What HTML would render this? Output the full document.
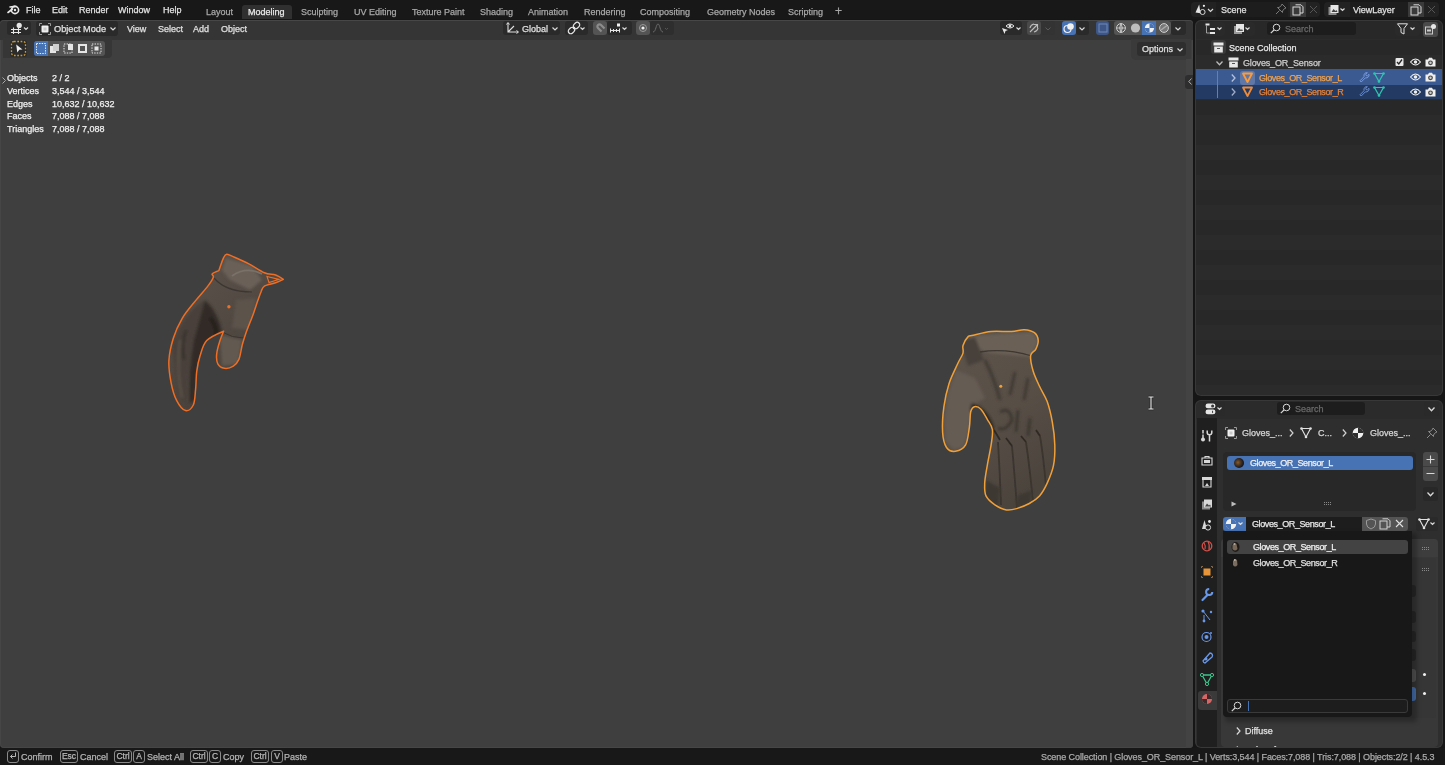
<!DOCTYPE html>
<html><head><meta charset="utf-8">
<style>
*{box-sizing:border-box;margin:0;padding:0}
html,body{width:1445px;height:765px;overflow:hidden;background:#161616;font-family:"Liberation Sans",sans-serif;font-size:9px;color:#dcdcdc}
.a{position:absolute}
#top,#vp,#outl,#props,#status{will-change:transform}
.t{position:absolute;white-space:nowrap;line-height:10px;height:10px;-webkit-font-smoothing:antialiased;-webkit-text-stroke:0.25px currentColor}
svg{position:absolute;overflow:visible}
#top{left:0;top:0;width:1445px;height:19px;background:#181818}
#vp{left:0px;top:20px;width:1193px;height:728px;background:#3f3f3f;border-radius:4px;overflow:hidden;box-shadow:inset 0 0 0 1px #464646}
#outl{left:1195px;top:20px;width:248px;height:376px;background:#282828;border-radius:6px;overflow:hidden}
#outl::after,#props::after{content:"";position:absolute;left:0;top:0;right:0;bottom:0;border-radius:6px;box-shadow:inset 0 0 0 1px #383838;pointer-events:none}
#props{left:1195px;top:400px;width:248px;height:348px;background:#2e2e2e;border-radius:6px;overflow:hidden}
#status{left:0;top:748px;width:1445px;height:17px;background:#181818}
.menu{color:#e2e2e2}
.tab{color:#a8a8a8}
.btn{position:absolute;background:#282828;border-radius:3px}
.key{position:absolute;border:1px solid #8a8a8a;border-radius:3px;height:13px;top:2px;color:#b8b8b8;font-size:8.5px;line-height:11px;text-align:center;-webkit-text-stroke:0.25px currentColor}
.st{color:#b4b4b4;top:4px}
</style></head><body>

<!-- TOP BAR -->
<div id="top" class="a">
  <!-- blender logo -->
  <svg style="left:7px;top:4px" width="13" height="11" viewBox="0 0 13 11">
    <circle cx="8" cy="6" r="3.6" fill="none" stroke="#e8e8e8" stroke-width="1.6"/>
    <circle cx="8" cy="6" r="1.2" fill="#e8e8e8"/>
    <path d="M1 8.5 L5.5 5 M3 3 L8 2.4" stroke="#e8e8e8" stroke-width="1.6" stroke-linecap="round"/>
  </svg>
  <div class="t menu" style="left:26px;top:5px">File</div>
  <div class="t menu" style="left:52px;top:5px">Edit</div>
  <div class="t menu" style="left:79px;top:5px">Render</div>
  <div class="t menu" style="left:118px;top:5px">Window</div>
  <div class="t menu" style="left:163px;top:5px">Help</div>

  <div class="a" style="left:242px;top:5px;width:50px;height:14px;background:#303030;border-radius:3px 3px 0 0"></div>
  <div class="t tab" style="left:206px;top:7px">Layout</div>
  <div class="t" style="left:248px;top:7px;color:#eaeaea">Modeling</div>
  <div class="t tab" style="left:301px;top:7px">Sculpting</div>
  <div class="t tab" style="left:354px;top:7px">UV Editing</div>
  <div class="t tab" style="left:412px;top:7px">Texture Paint</div>
  <div class="t tab" style="left:480px;top:7px">Shading</div>
  <div class="t tab" style="left:528px;top:7px">Animation</div>
  <div class="t tab" style="left:584px;top:7px">Rendering</div>
  <div class="t tab" style="left:640px;top:7px">Compositing</div>
  <div class="t tab" style="left:707px;top:7px">Geometry Nodes</div>
  <div class="t tab" style="left:788px;top:7px">Scripting</div>
  <div class="t tab" style="left:835px;top:6px;font-size:12px">+</div>

  <!-- scene selector -->
  <div class="a" style="left:1191px;top:2px;width:129px;height:15px;background:#222;border-radius:4px"></div>
  <div class="a" style="left:1216px;top:2px;width:72px;height:15px;background:#1d1d1d"></div>
  <div class="a" style="left:1290px;top:2px;width:16px;height:15px;background:#3a3a3a"></div>
  <div class="t" style="left:1221px;top:5px;color:#e0e0e0">Scene</div>
  <svg style="left:1195px;top:4px" width="20" height="12" viewBox="0 0 20 12">
    <path d="M0.5 8.5 L4.2 0.5 L5.5 9.3 Z" fill="#e6e6e6"/><circle cx="7.6" cy="8" r="2.5" fill="#1d1d1d" stroke="#d8d8d8" stroke-width="1"/><circle cx="8.9" cy="1.8" r="1.1" fill="#f0f0f0"/>
    <path d="M13 5 L15.5 7.5 L18 5" fill="none" stroke="#d8d8d8" stroke-width="1.2"/>
  </svg>
  <svg style="left:1275px;top:3px" width="12" height="12" viewBox="0 0 12 12"><path d="M7 1 L11 5 L9.5 5.5 L7.5 8 L7.5 9.5 L2.5 4.5 L4 4.5 L6.5 2.5 Z M4.5 7.5 L1 11" fill="none" stroke="#7a7a7a" stroke-width="1"/></svg>
  <svg style="left:1292px;top:4px" width="12" height="12" viewBox="0 0 12 12"><rect x="1" y="3" width="7" height="8" fill="none" stroke="#d8d8d8" stroke-width="1"/><path d="M3.5 0.8 H9 L11 2.8 V9 H8" fill="none" stroke="#d8d8d8" stroke-width="1"/></svg>
  <svg style="left:1309px;top:5px" width="9" height="9" viewBox="0 0 9 9"><path d="M1 1 L8 8 M8 1 L1 8" stroke="#555" stroke-width="1"/></svg>
  <div class="a" style="left:1324px;top:2px;width:115px;height:15px;background:#222;border-radius:4px"></div>
  <div class="a" style="left:1350px;top:2px;width:58px;height:15px;background:#1d1d1d"></div>
  <div class="a" style="left:1408px;top:2px;width:16px;height:15px;background:#3a3a3a"></div>
  <div class="t" style="left:1353px;top:5px;color:#e0e0e0">ViewLayer</div>
  <svg style="left:1328px;top:4px" width="20" height="12" viewBox="0 0 20 12">
    <rect x="0.5" y="3" width="8" height="8" fill="#8a8a8a"/><rect x="2.5" y="1" width="8" height="8" fill="#e6e6e6"/><path d="M3.5 8 L5.5 5 L7.5 7 L8.5 6 L9.5 8 Z" fill="#444"/>
    <path d="M12.5 4.5 L14.5 6.5 L16.5 4.5" fill="none" stroke="#d8d8d8" stroke-width="1.2"/>
  </svg>
  <svg style="left:1410px;top:4px" width="12" height="12" viewBox="0 0 12 12"><rect x="1" y="3" width="7" height="8" fill="none" stroke="#d8d8d8" stroke-width="1"/><path d="M3.5 0.8 H9 L11 2.8 V9 H8" fill="none" stroke="#d8d8d8" stroke-width="1"/></svg>
  <svg style="left:1427px;top:5px" width="9" height="9" viewBox="0 0 9 9"><path d="M1 1 L8 8 M8 1 L1 8" stroke="#555" stroke-width="1"/></svg>
</div>

<!-- VIEWPORT -->
<div id="vp" class="a">
  <div class="a" style="left:0;top:0;width:1193px;height:20px;background:#353535;border-radius:4px 4px 0 0;box-shadow:inset 0 1px 0 #474747"></div>
  <div class="a" style="left:2px;top:-1px;width:1190px;height:729px">
  <!-- header: coordinates relative to vp (x-2, y-19) -->
  <!-- editor type -->
  <div class="btn" style="left:5px;top:2px;width:24px;height:14px;background:#2a2a2a"></div>
  <svg style="left:8px;top:3px" width="20" height="12" viewBox="0 0 20 12">
    <path d="M1 7.5 H11 M1 10.5 H11 M3.5 5.5 V12 M8.5 5.5 V12" stroke="#e6e6e6" stroke-width="1.1"/>
    <circle cx="9.2" cy="3.4" r="2.6" fill="#e6e6e6"/>
    <path d="M14 5.5 L16 7.5 L18 5.5" fill="none" stroke="#d8d8d8" stroke-width="1.2"/>
  </svg>
  <!-- object mode -->
  <div class="btn" style="left:34px;top:2px;width:82px;height:15px;background:#2a2a2a"></div>
  <svg style="left:37px;top:4px" width="12" height="12" viewBox="0 0 12 12">
    <path d="M0.5 3 V0.5 H3 M9 0.5 H11.5 V3 M11.5 9 V11.5 H9 M3 11.5 H0.5 V9" fill="none" stroke="#9a9a9a" stroke-width="1"/>
    <rect x="2.5" y="2.5" width="7" height="7" rx="1" fill="#f0f0f0"/>
    <rect x="4.5" y="4.5" width="3" height="3" fill="#c8c8c8"/>
  </svg>
  <div class="t" style="left:52px;top:5px;color:#e0e0e0;font-size:9.2px">Object Mode</div>
  <svg style="left:108px;top:8px" width="6" height="4" viewBox="0 0 6 4"><path d="M0.5 0.5 L3 3 L5.5 0.5" fill="none" stroke="#d8d8d8" stroke-width="1.2"/></svg>
  <div class="t" style="left:125px;top:5px;color:#e0e0e0">View</div>
  <div class="t" style="left:156px;top:5px;color:#e0e0e0">Select</div>
  <div class="t" style="left:191px;top:5px;color:#e0e0e0">Add</div>
  <div class="t" style="left:219px;top:5px;color:#e0e0e0">Object</div>

  <!-- transform orientation -->
  <div class="btn" style="left:501px;top:2px;width:57px;height:14px;background:#2a2a2a"></div>
  <svg style="left:504px;top:3px" width="14" height="12" viewBox="0 0 14 12">
    <path d="M2 1 V10 H12 M2 10 L8 4" fill="none" stroke="#e0e0e0" stroke-width="1.1"/>
    <path d="M0.5 2.5 L2 0.5 L3.5 2.5 M10.5 8.5 L12.5 10 L10.5 11.5" fill="none" stroke="#e0e0e0" stroke-width="1"/>
  </svg>
  <div class="t" style="left:520px;top:5px;color:#e0e0e0">Global</div>
  <svg style="left:550px;top:8px" width="6" height="4" viewBox="0 0 6 4"><path d="M0.5 0.5 L3 3 L5.5 0.5" fill="none" stroke="#d8d8d8" stroke-width="1.2"/></svg>
  <!-- pivot -->
  <div class="btn" style="left:563px;top:2px;width:23px;height:14px;background:#2a2a2a"></div>
  <svg style="left:566px;top:3px" width="18" height="12" viewBox="0 0 18 12">
    <rect x="0" y="6" width="7" height="5" rx="2.5" transform="rotate(-45 3.5 8.5)" fill="none" stroke="#e6e6e6" stroke-width="1.2"/>
    <rect x="5" y="1" width="7" height="5" rx="2.5" transform="rotate(-45 8.5 3.5)" fill="none" stroke="#e6e6e6" stroke-width="1.2"/>
    <circle cx="6" cy="6" r="1.3" fill="#e6e6e6"/>
    <path d="M12.5 5.5 L14.5 7.5 L16.5 5.5" fill="none" stroke="#d8d8d8" stroke-width="1.2"/>
  </svg>
  <!-- snap -->
  <div class="btn" style="left:591px;top:2px;width:14px;height:14px;background:#545454"></div>
  <svg style="left:592px;top:3px" width="12" height="12" viewBox="0 0 12 12"><path d="M2.5 9.5 L6 6 A2.1 2.1 0 0 1 9 9 L5.5 12.5" transform="rotate(-90 6 6) translate(0 -2)" fill="none" stroke="#8c8c8c" stroke-width="2.2"/></svg>
  <div class="btn" style="left:605px;top:2px;width:25px;height:14px;background:#2a2a2a"></div>
  <svg style="left:607px;top:3px" width="22" height="12" viewBox="0 0 22 12">
    <path d="M1 8.5 H11 M1.5 6.5 V10.5 M4.5 7 V10 M7.5 7 V10 M10.5 6.5 V10.5" stroke="#e6e6e6" stroke-width="1"/>
    <rect x="8" y="1.5" width="3" height="3" fill="#f0f0f0"/>
    <path d="M13.5 5.5 L15.5 7.5 L17.5 5.5" fill="none" stroke="#d8d8d8" stroke-width="1.2"/>
  </svg>
  <!-- proportional -->
  <div class="btn" style="left:634px;top:2px;width:14px;height:14px;background:#545454"></div>
  <svg style="left:636px;top:4px" width="10" height="10" viewBox="0 0 10 10"><circle cx="5" cy="5" r="3.5" fill="none" stroke="#9a9a9a" stroke-width="1"/><circle cx="5" cy="5" r="1.6" fill="#f0f0f0"/></svg>
  <div class="btn" style="left:648px;top:2px;width:24px;height:14px;background:#2e2e2e"></div>
  <svg style="left:650px;top:3px" width="20" height="12" viewBox="0 0 20 12"><path d="M1 10 C4 10 4 2 6 2 C8 2 8 10 11 10" fill="none" stroke="#6a6a6a" stroke-width="1"/><path d="M13 6 L14.5 7.5 L16 6" fill="none" stroke="#555" stroke-width="1"/></svg>

  <!-- right header icons -->
  <div class="btn" style="left:998px;top:2px;width:22px;height:14px;background:#2a2a2a"></div>
  <svg style="left:999px;top:3px" width="22" height="12" viewBox="0 0 22 12">
    <path d="M5 4 Q9 0 13 4 Q9 8 5 4 Z" fill="none" stroke="#e6e6e6" stroke-width="1"/><circle cx="9" cy="4" r="1.4" fill="#e6e6e6"/>
    <path d="M1 6 L7 8 L4.5 9 L3.5 12 Z" fill="#e6e6e6"/>
    <path d="M15.5 5.5 L17.5 7.5 L19.5 5.5" fill="none" stroke="#d8d8d8" stroke-width="1.2"/>
  </svg>
  <div class="btn" style="left:1025px;top:2px;width:14px;height:14px;background:#4a4a4a"></div>
  <svg style="left:1026px;top:3px" width="12" height="12" viewBox="0 0 12 12"><path d="M2 10 L9 3 M6 2.5 H9.5 V6 M2 6 A5 5 0 0 1 6 2 M6 10 A5 5 0 0 0 10 6" fill="none" stroke="#bdbdbd" stroke-width="1.1"/></svg>
  <div class="btn" style="left:1039px;top:2px;width:14px;height:14px;background:#333"></div>
  <svg style="left:1043px;top:8px" width="6" height="4" viewBox="0 0 6 4"><path d="M0.5 0.5 L3 3 L5.5 0.5" fill="none" stroke="#5a5a5a" stroke-width="1"/></svg>
  <div class="btn" style="left:1060px;top:2px;width:14px;height:14px;background:#4772b3"></div>
  <svg style="left:1061px;top:3px" width="12" height="12" viewBox="0 0 12 12"><circle cx="4.5" cy="7" r="3.5" fill="none" stroke="#f0f0f0" stroke-width="1.2"/><circle cx="7.5" cy="4.5" r="3.3" fill="#f0f0f0"/></svg>
  <div class="btn" style="left:1074px;top:2px;width:13px;height:14px;background:#2a2a2a"></div>
  <svg style="left:1077px;top:8px" width="6" height="4" viewBox="0 0 6 4"><path d="M0.5 0.5 L3 3 L5.5 0.5" fill="none" stroke="#d8d8d8" stroke-width="1.2"/></svg>
  <div class="btn" style="left:1094px;top:2px;width:13px;height:14px;background:#3e5685"></div>
  <svg style="left:1096px;top:4px" width="10" height="10" viewBox="0 0 10 10"><rect x="1" y="1" width="8" height="8" fill="none" stroke="#6e88b8" stroke-width="1"/></svg>
  <div class="btn" style="left:1112px;top:2px;width:57px;height:14px;background:#545454"></div>
  <div class="a" style="left:1140px;top:2px;width:14px;height:14px;background:#4772b3"></div>
  <svg style="left:1113px;top:3px" width="56" height="12" viewBox="0 0 56 12">
    <circle cx="6" cy="6" r="4.4" fill="none" stroke="#cfcfcf" stroke-width="1"/><path d="M1.6 6 H10.4 M6 1.6 V10.4 M6 1.6 Q3 6 6 10.4 M6 1.6 Q9 6 6 10.4" fill="none" stroke="#cfcfcf" stroke-width="0.8"/>
    <circle cx="20.5" cy="6" r="4.6" fill="#bdbdbd"/>
    <circle cx="34.5" cy="6" r="4.6" fill="#f0f0f0"/><path d="M34.5 6 V1.4 A4.6 4.6 0 0 1 39.1 6 Z M34.5 6 V10.6 A4.6 4.6 0 0 1 29.9 6 Z" fill="#4772b3"/>
    <circle cx="49" cy="6" r="4.4" fill="#777" stroke="#cfcfcf" stroke-width="1"/><path d="M46 8 L52 3.5" stroke="#aaa" stroke-width="1.5"/>
  </svg>
  <div class="btn" style="left:1169px;top:2px;width:15px;height:14px;background:#2a2a2a"></div>
  <svg style="left:1173px;top:8px" width="6" height="4" viewBox="0 0 6 4"><path d="M0.5 0.5 L3 3 L5.5 0.5" fill="none" stroke="#d8d8d8" stroke-width="1.2"/></svg>

  <!-- Options -->
  <div class="a" style="left:1129px;top:20px;width:60px;height:21px;background:#3a3a3a;border-radius:0 0 0 5px"></div>
  <div class="btn" style="left:1135px;top:23px;width:49px;height:14px;background:#2e2e2e"></div>
  <div class="t" style="left:1140px;top:25px;color:#e0e0e0">Options</div>
  <svg style="left:1175px;top:29px" width="6" height="4" viewBox="0 0 6 4"><path d="M0.5 0.5 L3 3 L5.5 0.5" fill="none" stroke="#d8d8d8" stroke-width="1.2"/></svg>

  <!-- tool row -->
  <div class="a" style="left:1px;top:19px;width:109px;height:20px;background:#363636;border-radius:0 0 4px 0"></div>
  <div class="a" style="left:8px;top:21px;width:17px;height:17px;background:#2b2b2b;border-radius:3px"></div>
  <svg style="left:8px;top:21px" width="17" height="17" viewBox="0 0 17 17">
    <rect x="1.5" y="1.5" width="14" height="14" rx="2.5" fill="none" stroke="#c89a3c" stroke-width="1.3" stroke-dasharray="1.7 1.6"/>
    <path d="M6.2 4.5 L12.5 9.5 L9.3 9.8 L7.3 12.6 Z" fill="#f0f0f0"/>
  </svg>
  <div class="a" style="left:32px;top:22px;width:71px;height:15px;background:#545454;border-radius:3px"></div>
  <div class="a" style="left:32px;top:22px;width:14px;height:15px;background:#4772b3;border-radius:3px 0 0 3px"></div>
  <svg style="left:32px;top:22px" width="72" height="15" viewBox="0 0 72 15">
    <rect x="2.5" y="2.5" width="9" height="10" fill="none" stroke="#f0f0f0" stroke-width="1" stroke-dasharray="1.4 1.2"/>
    <rect x="16" y="5" width="6" height="7" fill="#e6e6e6"/><rect x="19" y="3" width="6" height="7" fill="#cfcfcf"/>
    <path d="M30 3 H38 V12 H30 Z" fill="none" stroke="#e6e6e6" stroke-width="1" stroke-dasharray="1.4 1.2"/><rect x="34" y="3" width="5" height="6" fill="#e6e6e6"/>
    <rect x="44" y="3" width="9" height="9" fill="#e6e6e6"/><rect x="46" y="5" width="5" height="5" fill="#545454"/>
    <path d="M58 3 H67 V12 H58 Z" fill="none" stroke="#e6e6e6" stroke-width="1" stroke-dasharray="1.4 1.2"/><rect x="60.5" y="5.5" width="4" height="4" fill="#e6e6e6"/>
  </svg>

  <!-- stats overlay -->
  <svg style="left:0px;top:58px" width="4" height="7" viewBox="0 0 4 7"><path d="M0.5 0.5 L3.5 3.5 L0.5 6.5" fill="none" stroke="#aaa" stroke-width="1"/></svg>
  <div class="t" style="left:5px;top:54px;color:#f0f0f0">Objects</div>
  <div class="t" style="left:50px;top:54px;color:#f0f0f0">2 / 2</div>
  <div class="t" style="left:5px;top:67px;color:#f0f0f0">Vertices</div>
  <div class="t" style="left:50px;top:67px;color:#f0f0f0">3,544 / 3,544</div>
  <div class="t" style="left:5px;top:80px;color:#f0f0f0">Edges</div>
  <div class="t" style="left:50px;top:80px;color:#f0f0f0">10,632 / 10,632</div>
  <div class="t" style="left:5px;top:92px;color:#f0f0f0">Faces</div>
  <div class="t" style="left:50px;top:92px;color:#f0f0f0">7,088 / 7,088</div>
  <div class="t" style="left:5px;top:105px;color:#f0f0f0">Triangles</div>
  <div class="t" style="left:50px;top:105px;color:#f0f0f0">7,088 / 7,088</div>

  <!-- collapse arrow near outliner -->
  <div class="a" style="left:1184px;top:40px;width:7px;height:690px;background:#434343"></div>
  <div class="a" style="left:1183px;top:56px;width:8px;height:14px;background:#2e2e2e;border-radius:3px 0 0 3px"></div>
  <svg style="left:1186px;top:59px" width="4" height="7" viewBox="0 0 4 7"><path d="M3.5 0.5 L0.8 3.5 L3.5 6.5" fill="none" stroke="#bbb" stroke-width="0.9"/></svg>

  <!-- gloves (absolute page coords) -->
  <svg style="left:-2px;top:-19px" width="1445" height="765" viewBox="0 0 1445 765">
    <defs>
      <filter id="bl" x="-20%" y="-20%" width="140%" height="140%"><feGaussianBlur stdDeviation="1.5"/></filter>
      <filter id="bl2" x="-20%" y="-20%" width="140%" height="140%"><feGaussianBlur stdDeviation="0.7"/></filter>
      <linearGradient id="gL" x1="0" y1="0" x2="0.6" y2="1">
        <stop offset="0" stop-color="#5e564e"/><stop offset="0.5" stop-color="#524a43"/><stop offset="1" stop-color="#453e38"/>
      </linearGradient>
      <linearGradient id="gR" x1="0" y1="0" x2="0.5" y2="1">
        <stop offset="0" stop-color="#5e554c"/><stop offset="0.6" stop-color="#574e46"/><stop offset="1" stop-color="#4b443d"/>
      </linearGradient>
      <clipPath id="cL"><path d="M226.7 254.3 C228.5 254.1 230.7 255.6 234.4 257.2 C238.1 258.8 243.9 261.3 248.9 263.9 C253.9 266.5 259.9 270.9 264.4 272.8 C268.8 274.7 272.5 273.9 275.6 275.0 C278.8 276.1 283.3 279.4 283.3 279.4 C283.3 279.4 278.8 281.7 275.6 282.8 C272.5 283.9 266.8 284.6 264.4 286.1 C262.0 287.6 262.2 289.3 261.1 291.7 C260.0 294.1 259.1 296.9 257.8 300.6 C256.5 304.3 255.3 308.3 253.3 313.9 C251.3 319.4 247.4 328.7 245.6 333.9 C243.8 339.1 243.3 340.8 242.2 345.0 C241.1 349.2 240.4 355.9 238.9 359.4 C237.4 362.9 235.7 364.6 233.3 366.1 C230.9 367.6 227.0 368.7 224.4 368.3 C221.8 367.9 219.1 366.3 217.8 363.9 C216.5 361.5 216.3 357.8 216.7 353.9 C217.1 350.0 218.8 344.4 220.0 340.6 C221.2 336.8 223.6 331.2 223.6 331.2 C223.6 331.2 210.6 336.5 206.7 340.6 C202.8 344.8 201.7 350.9 200.0 356.1 C198.3 361.3 197.4 366.1 196.7 371.7 C196.0 377.2 196.2 383.8 195.6 389.4 C195.0 394.9 195.0 401.5 193.3 405.0 C191.6 408.5 188.4 411.3 185.6 410.6 C182.8 409.9 179.1 405.2 176.7 400.6 C174.3 396.0 172.4 389.5 171.1 382.8 C169.8 376.1 168.5 368.0 168.9 360.6 C169.3 353.2 171.1 345.4 173.3 338.3 C175.5 331.2 178.5 324.6 182.2 318.3 C185.9 312.0 191.3 306.0 195.6 300.6 C199.9 295.2 204.9 290.0 207.8 286.1 C210.8 282.2 212.6 279.2 213.3 277.2 C214.0 275.2 211.3 275.0 212.2 273.9 C213.1 272.8 218.9 270.6 218.9 270.6 C218.9 270.6 222.0 261.0 223.3 258.3 C224.6 255.6 224.8 254.5 226.7 254.3 Z"/></clipPath>
      <clipPath id="cR"><path d="M968.1 336.6 C969.8 334.9 969.4 336.2 973.2 335.3 C977.0 334.4 984.7 332.1 991.1 331.5 C997.5 330.9 1006.0 331.8 1011.5 331.5 C1017.0 331.2 1020.4 329.5 1024.2 329.7 C1028.0 329.9 1032.1 330.9 1034.4 332.7 C1036.7 334.5 1038.0 337.6 1038.2 340.4 C1038.4 343.2 1037.0 346.8 1035.7 349.3 C1034.4 351.9 1031.0 352.1 1030.6 355.7 C1030.2 359.3 1031.6 365.9 1033.1 371.0 C1034.6 376.1 1037.2 381.2 1039.5 386.3 C1041.8 391.4 1045.1 395.7 1047.2 401.6 C1049.3 407.6 1051.0 414.8 1052.3 422.0 C1053.6 429.2 1054.6 437.7 1054.8 444.9 C1055.0 452.1 1054.8 458.9 1053.5 465.3 C1052.2 471.7 1049.5 478.0 1047.2 483.1 C1044.9 488.2 1042.5 492.5 1039.5 495.9 C1036.5 499.3 1033.1 501.4 1029.3 503.5 C1025.5 505.6 1020.4 507.5 1016.6 508.6 C1012.8 509.7 1010.0 510.5 1006.4 509.9 C1002.8 509.3 998.3 507.1 994.9 504.8 C991.5 502.5 987.7 499.5 986.0 495.9 C984.3 492.3 984.5 488.2 984.7 483.1 C984.9 478.0 986.2 471.7 987.3 465.3 C988.4 458.9 990.2 450.8 991.1 444.9 C992.0 438.9 993.0 433.9 992.4 429.6 C991.8 425.4 989.2 422.8 987.3 419.4 C985.4 416.0 983.0 411.3 980.9 409.2 C978.8 407.1 976.2 406.3 974.5 406.7 C972.8 407.1 971.6 408.4 970.7 411.8 C969.9 415.2 970.2 421.6 969.4 427.1 C968.5 432.6 967.9 440.9 965.6 444.9 C963.3 448.9 958.6 450.9 955.4 451.3 C952.2 451.7 948.6 450.7 946.5 447.5 C944.4 444.3 943.0 439.0 942.6 432.2 C942.2 425.4 942.8 414.8 943.9 406.7 C945.0 398.6 946.7 390.9 949.0 383.7 C951.3 376.5 955.6 368.4 957.9 363.3 C960.2 358.2 962.1 356.1 963.0 353.1 C963.9 350.1 962.1 348.2 963.0 345.5 C963.9 342.8 966.4 338.3 968.1 336.6 Z"/></clipPath>
    </defs>
    <!-- LEFT glove -->
    <g clip-path="url(#cL)">
      <rect x="160" y="250" width="130" height="165" fill="url(#gL)"/>
      <g filter="url(#bl)">
        <path d="M172 345 Q185 310 205 300 Q200 320 192 350 Q186 380 188 405 L178 398 Z" fill="#48413b"/>
        <path d="M205 300 Q218 312 222 332 Q210 338 203 352 Q197 370 195 400 L190 404 Q188 370 194 340 Z" fill="#302a25"/>
        <path d="M210 318 Q220 330 214 345" fill="none" stroke="#201c19" stroke-width="3"/>
        <path d="M180 340 Q176 370 182 398" fill="none" stroke="#5c544c" stroke-width="2"/>
        <path d="M186 330 Q181 345 184 360" fill="none" stroke="#2f2924" stroke-width="2"/>
        <path d="M226 258 L252 266 L262 280 L250 290 L230 280 L222 270 Z" fill="#6a6158"/>
        <path d="M220 335 L242 340 L238 364 L222 366 Z" fill="#625a51"/>
        <path d="M236 300 L256 298 L250 330 L232 328 Z" fill="#5b534b"/>
      </g>
      <path d="M232 276 Q246 266 262 274" fill="none" stroke="#7a7168" stroke-width="1.8" filter="url(#bl2)"/>
      <path d="M222 332 Q232 338 244 338" fill="none" stroke="#3a342f" stroke-width="1" filter="url(#bl2)"/>
      <path d="M214 278 Q226 292 252 292" fill="none" stroke="#3c3631" stroke-width="1.2" filter="url(#bl2)"/>
    </g>
    <path d="M226.7 254.3 C228.5 254.1 230.7 255.6 234.4 257.2 C238.1 258.8 243.9 261.3 248.9 263.9 C253.9 266.5 259.9 270.9 264.4 272.8 C268.8 274.7 272.5 273.9 275.6 275.0 C278.8 276.1 283.3 279.4 283.3 279.4 C283.3 279.4 278.8 281.7 275.6 282.8 C272.5 283.9 266.8 284.6 264.4 286.1 C262.0 287.6 262.2 289.3 261.1 291.7 C260.0 294.1 259.1 296.9 257.8 300.6 C256.5 304.3 255.3 308.3 253.3 313.9 C251.3 319.4 247.4 328.7 245.6 333.9 C243.8 339.1 243.3 340.8 242.2 345.0 C241.1 349.2 240.4 355.9 238.9 359.4 C237.4 362.9 235.7 364.6 233.3 366.1 C230.9 367.6 227.0 368.7 224.4 368.3 C221.8 367.9 219.1 366.3 217.8 363.9 C216.5 361.5 216.3 357.8 216.7 353.9 C217.1 350.0 218.8 344.4 220.0 340.6 C221.2 336.8 223.6 331.2 223.6 331.2 C223.6 331.2 210.6 336.5 206.7 340.6 C202.8 344.8 201.7 350.9 200.0 356.1 C198.3 361.3 197.4 366.1 196.7 371.7 C196.0 377.2 196.2 383.8 195.6 389.4 C195.0 394.9 195.0 401.5 193.3 405.0 C191.6 408.5 188.4 411.3 185.6 410.6 C182.8 409.9 179.1 405.2 176.7 400.6 C174.3 396.0 172.4 389.5 171.1 382.8 C169.8 376.1 168.5 368.0 168.9 360.6 C169.3 353.2 171.1 345.4 173.3 338.3 C175.5 331.2 178.5 324.6 182.2 318.3 C185.9 312.0 191.3 306.0 195.6 300.6 C199.9 295.2 204.9 290.0 207.8 286.1 C210.8 282.2 212.6 279.2 213.3 277.2 C214.0 275.2 211.3 275.0 212.2 273.9 C213.1 272.8 218.9 270.6 218.9 270.6 C218.9 270.6 222.0 261.0 223.3 258.3 C224.6 255.6 224.8 254.5 226.7 254.3 Z" fill="none" stroke="#ee6e26" stroke-width="1.5" stroke-linejoin="round"/>
    <path d="M267 276.5 L279 279.4 L269 282.5 Z" fill="#4a4540" stroke="#ee6e26" stroke-width="1.1"/>
    <circle cx="228.9" cy="306.8" r="1.7" fill="#ee6e26"/>

    <!-- RIGHT glove -->
    <g clip-path="url(#cR)">
      <rect x="935" y="325" width="125" height="190" fill="url(#gR)"/>
      <g filter="url(#bl)">
        <path d="M969 336 L1033 332 L1038 342 L1031 357 L990 353 L975 348 Z" fill="#6a6157"/>
        <path d="M960 342 L975 337 L984 360 L968 366 Z" fill="#47403a"/>
        <path d="M944 420 L948 393 L956 370 L975 378 L985 398 L973 405 L969 432 L964 447 L954 450 L945 441 Z" fill="#655c53"/>
        <path d="M972 403 Q988 408 994 428 L990 440 Q984 418 970 410 Z" fill="#25211d"/>
        <path d="M985 360 Q995 380 1000 400" fill="none" stroke="#3e3832" stroke-width="3"/>
        <path d="M1015 372 L1010 395 M1028 378 L1024 400" fill="none" stroke="#3a342f" stroke-width="2.5"/>
        <path d="M1000 412 Q1010 406 1012 420 Q1006 432 998 428 M1018 410 L1016 432 M1030 418 L1028 436" fill="none" stroke="#35302b" stroke-width="2.4"/>
      </g>
      <g filter="url(#bl2)" fill="none" stroke="#3a342f" stroke-width="1.8">
        <path d="M998 442 Q1000 475 1001 505 M1012 446 Q1015 480 1017 508 M1026 442 Q1030 470 1033 502 M1040 436 Q1044 460 1046 488"/>
        <path d="M994 430 L1000 440 M1006 438 L1012 446 M1021 436 L1026 442 M1036 430 L1040 436" stroke="#2f2924"/>
      </g>
      <g filter="url(#bl)">
        <path d="M986 480 L1000 488 L998 508 L985 498 Z" fill="#3c3731"/>
        <path d="M1018 495 L1032 490 L1030 505 L1016 508 Z" fill="#3e3832"/>
      </g>
      <path d="M980 352 Q1005 348 1032 356" fill="none" stroke="#3c3731" stroke-width="1.3" filter="url(#bl2)"/>
    </g>
    <path d="M968.1 336.6 C969.8 334.9 969.4 336.2 973.2 335.3 C977.0 334.4 984.7 332.1 991.1 331.5 C997.5 330.9 1006.0 331.8 1011.5 331.5 C1017.0 331.2 1020.4 329.5 1024.2 329.7 C1028.0 329.9 1032.1 330.9 1034.4 332.7 C1036.7 334.5 1038.0 337.6 1038.2 340.4 C1038.4 343.2 1037.0 346.8 1035.7 349.3 C1034.4 351.9 1031.0 352.1 1030.6 355.7 C1030.2 359.3 1031.6 365.9 1033.1 371.0 C1034.6 376.1 1037.2 381.2 1039.5 386.3 C1041.8 391.4 1045.1 395.7 1047.2 401.6 C1049.3 407.6 1051.0 414.8 1052.3 422.0 C1053.6 429.2 1054.6 437.7 1054.8 444.9 C1055.0 452.1 1054.8 458.9 1053.5 465.3 C1052.2 471.7 1049.5 478.0 1047.2 483.1 C1044.9 488.2 1042.5 492.5 1039.5 495.9 C1036.5 499.3 1033.1 501.4 1029.3 503.5 C1025.5 505.6 1020.4 507.5 1016.6 508.6 C1012.8 509.7 1010.0 510.5 1006.4 509.9 C1002.8 509.3 998.3 507.1 994.9 504.8 C991.5 502.5 987.7 499.5 986.0 495.9 C984.3 492.3 984.5 488.2 984.7 483.1 C984.9 478.0 986.2 471.7 987.3 465.3 C988.4 458.9 990.2 450.8 991.1 444.9 C992.0 438.9 993.0 433.9 992.4 429.6 C991.8 425.4 989.2 422.8 987.3 419.4 C985.4 416.0 983.0 411.3 980.9 409.2 C978.8 407.1 976.2 406.3 974.5 406.7 C972.8 407.1 971.6 408.4 970.7 411.8 C969.9 415.2 970.2 421.6 969.4 427.1 C968.5 432.6 967.9 440.9 965.6 444.9 C963.3 448.9 958.6 450.9 955.4 451.3 C952.2 451.7 948.6 450.7 946.5 447.5 C944.4 444.3 943.0 439.0 942.6 432.2 C942.2 425.4 942.8 414.8 943.9 406.7 C945.0 398.6 946.7 390.9 949.0 383.7 C951.3 376.5 955.6 368.4 957.9 363.3 C960.2 358.2 962.1 356.1 963.0 353.1 C963.9 350.1 962.1 348.2 963.0 345.5 C963.9 342.8 966.4 338.3 968.1 336.6 Z" fill="none" stroke="#f0a03a" stroke-width="1.5" stroke-linejoin="round"/>
    <circle cx="1000.8" cy="386.3" r="1.5" fill="#f0a03a"/>
  </svg>

  <!-- cursor -->
  <svg style="left:1144px;top:377px" width="10" height="14" viewBox="0 0 10 14"><path d="M2.5 1 H7.5 M5 1 V13 M2.5 13 H7.5" stroke="#1e1e1e" stroke-width="2.6"/><path d="M2.5 1 H7.5 M5 1 V13 M2.5 13 H7.5" stroke="#f0f0f0" stroke-width="1.1"/></svg>
  </div>
</div>

<!-- OUTLINER -->
<div id="outl" class="a">
<div class="a" style="left:0;top:-1px;width:248px;height:376px">
  <!-- stripes (coords relative: x-1195, y-19) -->
  <div class="a" style="left:0;top:0;width:248px;height:376px;background:repeating-linear-gradient(180deg,#2b2b2b 0px,#2b2b2b 15px,#282828 15px,#282828 30px);background-position:0 6px"></div>
  <div class="a" style="left:0;top:0;width:248px;height:20px;background:#282828"></div>
  <!-- header -->
  <div class="btn" style="left:8px;top:3px;width:22px;height:14px;background:#2a2a2a"></div>
  <svg style="left:10px;top:4px" width="20" height="12" viewBox="0 0 20 12">
    <rect x="0.5" y="0.5" width="4" height="2" fill="#e6e6e6"/><path d="M1.5 2.5 V10 H5" fill="none" stroke="#bbb" stroke-width="0.8"/>
    <rect x="5" y="5" width="5" height="2" fill="#e6e6e6"/><rect x="5" y="9" width="5" height="2" fill="#e6e6e6"/>
    <path d="M12.5 4.5 L14.5 6.5 L16.5 4.5" fill="none" stroke="#d8d8d8" stroke-width="1.2"/>
  </svg>
  <div class="btn" style="left:36px;top:3px;width:24px;height:14px;background:#2a2a2a"></div>
  <svg style="left:38px;top:4px" width="20" height="12" viewBox="0 0 20 12">
    <rect x="1" y="3" width="8" height="8" fill="#9a9a9a"/><rect x="3" y="1" width="8" height="8" fill="#e6e6e6"/><path d="M4 8 L6 5 L8 7 L9 6 L10 8 Z" fill="#555"/>
    <path d="M12.5 4.5 L14.5 6.5 L16.5 4.5" fill="none" stroke="#d8d8d8" stroke-width="1.2"/>
  </svg>
  <div class="a" style="left:72px;top:3px;width:89px;height:13px;background:#1d1d1d;border-radius:3px"></div>
  <svg style="left:75px;top:4px" width="11" height="11" viewBox="0 0 11 11"><circle cx="6.5" cy="4.5" r="3.3" fill="none" stroke="#d8d8d8" stroke-width="1"/><path d="M4 7 L0.8 10.2" stroke="#d8d8d8" stroke-width="1.2"/></svg>
  <div class="t" style="left:90px;top:5px;color:#6a6a6a">Search</div>
  <div class="btn" style="left:200px;top:3px;width:25px;height:14px;background:#2a2a2a"></div>
  <svg style="left:202px;top:4px" width="20" height="12" viewBox="0 0 20 12"><path d="M0.5 0.8 H10.5 L7 5.5 V11 L4 9.5 V5.5 Z" fill="none" stroke="#e0e0e0" stroke-width="1"/><path d="M13.5 4.5 L15.5 6.5 L17.5 4.5" fill="none" stroke="#d8d8d8" stroke-width="1.2"/></svg>
  <div class="btn" style="left:228px;top:3px;width:15px;height:15px;background:#4a4a4a"></div>
  <svg style="left:229px;top:4px" width="13" height="13" viewBox="0 0 13 13"><rect x="1.5" y="4" width="7" height="7" fill="none" stroke="#ccc" stroke-width="1"/><rect x="3" y="6.5" width="4" height="2" fill="#ccc"/><circle cx="9.5" cy="3.5" r="2.5" fill="#e6e6e6"/></svg>

  <!-- Scene Collection row (y center 48 => rel 29) -->
  <div class="a" style="left:16px;top:21px;width:15px;height:14px;background:#3a3a3a;border-radius:3px"></div>
  <svg style="left:18px;top:23px" width="11" height="11" viewBox="0 0 11 11"><rect x="0.5" y="0.5" width="10" height="3" fill="#e8e8e8"/><rect x="1.2" y="4.5" width="8.6" height="6" fill="#e8e8e8"/><rect x="4" y="6" width="3" height="1" fill="#555"/></svg>
  <div class="t" style="left:34px;top:24px;color:#e8e8e8">Scene Collection</div>
  <!-- Gloves_OR_Sensor row (center 63 => rel 44) -->
  <svg style="left:21px;top:42px" width="7" height="5" viewBox="0 0 7 5"><path d="M0.5 0.5 L3.5 3.8 L6.5 0.5" fill="none" stroke="#bbb" stroke-width="1.3"/></svg>
  <svg style="left:33px;top:38px" width="11" height="11" viewBox="0 0 11 11"><rect x="0.5" y="0.5" width="10" height="3" fill="#e8e8e8"/><rect x="1.2" y="4.5" width="8.6" height="6" fill="#e8e8e8"/><rect x="4" y="6" width="3" height="1" fill="#555"/></svg>
  <div class="t" style="left:48px;top:39px;color:#cfcfcf;letter-spacing:-0.15px">Gloves_OR_Sensor</div>
  <svg style="left:200px;top:38px" width="9" height="10" viewBox="0 0 9 10"><rect x="0.5" y="1" width="8" height="8" rx="1" fill="#e8e8e8"/><path d="M2 5 L3.8 7 L7 2.5" fill="none" stroke="#222" stroke-width="1.3"/></svg>
  <!-- eye/camera helper -->
  <svg style="left:215px;top:39px" width="11" height="8" viewBox="0 0 11 8"><path d="M0.5 4 Q5.5 -2 10.5 4 Q5.5 10 0.5 4 Z" fill="none" stroke="#eee" stroke-width="1.1"/><circle cx="5.5" cy="4" r="1.7" fill="#eee"/></svg>
  <svg style="left:230px;top:38px" width="11" height="10" viewBox="0 0 11 10"><path d="M0.5 2.5 H3 L4 0.8 H7 L8 2.5 H10.5 V9.5 H0.5 Z" fill="#eee"/><circle cx="5.5" cy="5.8" r="2.4" fill="#444"/><circle cx="5.5" cy="5.8" r="1.2" fill="#ccc"/></svg>

  <!-- L row (active) y 70-85 => rel 51-66 -->
  <div class="a" style="left:0;top:50px;width:248px;height:16px;background:#3c5a92"></div>
  <div class="a" style="left:0;top:66px;width:248px;height:14px;background:#233b62"></div>
  <div class="a" style="left:22px;top:52px;width:1px;height:27px;background:#6f7f9a"></div>
  <svg style="left:36px;top:55px" width="5" height="8" viewBox="0 0 5 8"><path d="M0.8 0.5 L4 4 L0.8 7.5" fill="none" stroke="#b4c0dc" stroke-width="1.3"/></svg>
  <div class="a" style="left:45px;top:52px;width:15px;height:14px;background:#5f78a8;border-radius:3px"></div>
  <svg style="left:47px;top:53px" width="11" height="11" viewBox="0 0 11 11"><path d="M1 1.5 H10 L5.5 10 Z" fill="none" stroke="#ff9a38" stroke-width="1.8" stroke-linejoin="round"/></svg>
  <div class="t" style="left:64px;top:54px;color:#f2a24a;letter-spacing:-0.4px">Gloves_OR_Sensor_L</div>
  <svg style="left:164px;top:53px" width="10" height="11" viewBox="0 0 10 11"><path d="M1 8.8 L2.2 10 L6.3 5.9 Q8.3 6.3 9.5 4.8 Q10.3 3.6 10 2.3 L8.4 3.9 L7.1 3.6 L6.8 2.3 L8.4 0.7 Q7 0.4 5.9 1.3 Q4.6 2.6 5 4.7 Z" fill="none" stroke="#7aa0e8" stroke-width="0.9" stroke-linejoin="round"/></svg>
  <svg style="left:178px;top:53px" width="12" height="11" viewBox="0 0 12 11"><path d="M1.5 1.5 H10.5 L6 9.5 Z" fill="none" stroke="#2ec4b0" stroke-width="1.2"/><circle cx="1.5" cy="1.5" r="1.3" fill="#2ec4b0"/><circle cx="10.5" cy="1.5" r="1.3" fill="#2ec4b0"/><circle cx="6" cy="9.5" r="1.3" fill="#2ec4b0"/></svg>
  <svg style="left:215px;top:54px" width="11" height="8" viewBox="0 0 11 8"><path d="M0.5 4 Q5.5 -2 10.5 4 Q5.5 10 0.5 4 Z" fill="none" stroke="#eee" stroke-width="1.1"/><circle cx="5.5" cy="4" r="1.7" fill="#eee"/></svg>
  <svg style="left:230px;top:53px" width="11" height="10" viewBox="0 0 11 10"><path d="M0.5 2.5 H3 L4 0.8 H7 L8 2.5 H10.5 V9.5 H0.5 Z" fill="#eee"/><circle cx="5.5" cy="5.8" r="2.4" fill="#444"/><circle cx="5.5" cy="5.8" r="1.2" fill="#ccc"/></svg>
  <!-- R row -->
  <svg style="left:36px;top:69px" width="5" height="8" viewBox="0 0 5 8"><path d="M0.8 0.5 L4 4 L0.8 7.5" fill="none" stroke="#a0acc8" stroke-width="1.3"/></svg>
  <svg style="left:47px;top:67px" width="11" height="11" viewBox="0 0 11 11"><path d="M1 1.5 H10 L5.5 10 Z" fill="none" stroke="#ee8a3a" stroke-width="1.8" stroke-linejoin="round"/></svg>
  <div class="t" style="left:64px;top:68px;color:#e88236;letter-spacing:-0.4px">Gloves_OR_Sensor_R</div>
  <svg style="left:164px;top:67px" width="10" height="11" viewBox="0 0 10 11"><path d="M1 8.8 L2.2 10 L6.3 5.9 Q8.3 6.3 9.5 4.8 Q10.3 3.6 10 2.3 L8.4 3.9 L7.1 3.6 L6.8 2.3 L8.4 0.7 Q7 0.4 5.9 1.3 Q4.6 2.6 5 4.7 Z" fill="none" stroke="#6f94dc" stroke-width="0.9" stroke-linejoin="round"/></svg>
  <svg style="left:178px;top:67px" width="12" height="11" viewBox="0 0 12 11"><path d="M1.5 1.5 H10.5 L6 9.5 Z" fill="none" stroke="#2ec4b0" stroke-width="1.2"/><circle cx="1.5" cy="1.5" r="1.3" fill="#2ec4b0"/><circle cx="10.5" cy="1.5" r="1.3" fill="#2ec4b0"/><circle cx="6" cy="9.5" r="1.3" fill="#2ec4b0"/></svg>
  <svg style="left:215px;top:69px" width="11" height="8" viewBox="0 0 11 8"><path d="M0.5 4 Q5.5 -2 10.5 4 Q5.5 10 0.5 4 Z" fill="none" stroke="#eee" stroke-width="1.1"/><circle cx="5.5" cy="4" r="1.7" fill="#eee"/></svg>
  <svg style="left:230px;top:68px" width="11" height="10" viewBox="0 0 11 10"><path d="M0.5 2.5 H3 L4 0.8 H7 L8 2.5 H10.5 V9.5 H0.5 Z" fill="#eee"/><circle cx="5.5" cy="5.8" r="2.4" fill="#444"/><circle cx="5.5" cy="5.8" r="1.2" fill="#ccc"/></svg>
</div>
</div>

<!-- PROPERTIES -->
<div id="props" class="a">
<div class="a" style="left:0;top:-1px;width:248px;height:349px">
  <!-- rel coords: x-1195, y-399 -->
  <div class="a" style="left:0;top:0;width:248px;height:20px;background:#2b2b2b"></div>
  <div class="btn" style="left:8px;top:3px;width:22px;height:14px;background:#2a2a2a"></div>
  <svg style="left:10px;top:4px" width="20" height="12" viewBox="0 0 20 12">
    <rect x="0.5" y="0.5" width="10" height="4.8" rx="2.4" fill="#e6e6e6"/><circle cx="7.6" cy="2.9" r="1.5" fill="#333"/>
    <rect x="0.5" y="6.5" width="10" height="4.8" rx="2.4" fill="#e6e6e6"/><path d="M7.2 7.5 A1.5 1.5 0 0 1 7.2 10.3 Z" fill="#222"/>
    <path d="M12.5 4.5 L14.5 6.5 L16.5 4.5" fill="none" stroke="#d8d8d8" stroke-width="1.2"/>
  </svg>
  <div class="a" style="left:82px;top:3px;width:88px;height:13px;background:#1d1d1d;border-radius:3px"></div>
  <svg style="left:85px;top:4px" width="11" height="11" viewBox="0 0 11 11"><circle cx="6.5" cy="4.5" r="3.3" fill="none" stroke="#d8d8d8" stroke-width="1"/><path d="M4 7 L0.8 10.2" stroke="#d8d8d8" stroke-width="1.2"/></svg>
  <div class="t" style="left:100px;top:5px;color:#6a6a6a">Search</div>
  <div class="btn" style="left:229px;top:3px;width:15px;height:14px;background:#2a2a2a"></div>
  <svg style="left:233px;top:8px" width="7" height="5" viewBox="0 0 7 5"><path d="M0.5 0.5 L3.5 3.8 L6.5 0.5" fill="none" stroke="#d8d8d8" stroke-width="1.3"/></svg>

  <!-- nav bar -->
  <div class="a" style="left:2px;top:19px;width:20px;height:330px;background:#1f1f1f"></div>
  <div class="a" style="left:3px;top:292px;width:19px;height:19px;background:#3a3a3a;border-radius:3px 0 0 3px"></div>
  <svg style="left:5px;top:26px" width="16" height="300" viewBox="0 0 16 300">
    <!-- tool -->
    <g transform="translate(0 4)"><path d="M3 1 V4.5 M3 5.5 V9 M9.5 5.5 V12.5 M7.2 1.5 V3.5 A2.3 2.3 0 0 0 11.8 3.5 V1.5" fill="none" stroke="#d8d8d8" stroke-width="1.5"/>
    <circle cx="3" cy="10.5" r="2" fill="#d8d8d8"/></g>
    <!-- render (y~37) -->
    <path d="M2 33 H12 V40 H2 Z M5 33 V31.5 H9 V33" fill="none" stroke="#d8d8d8" stroke-width="1.1"/><rect x="4" y="35" width="6" height="3" fill="#d8d8d8"/>
    <!-- output (y~58) -->
    <rect x="2" y="52" width="10" height="3" fill="#d8d8d8"/><path d="M3 55 V62 H11 V55" fill="none" stroke="#d8d8d8" stroke-width="1.1"/><path d="M5 61 L7 58 L9 61 Z" fill="#d8d8d8"/>
    <!-- view layer (y~79) -->
    <g transform="translate(0 1.5)"><rect x="2" y="75" width="8" height="8" fill="#8a8a8a"/><rect x="4" y="73" width="8" height="8" fill="#d8d8d8"/><path d="M5 80 L7 77 L9 79 L10 78 L11 80 Z" fill="#444"/></g>
    <!-- scene (y~100) -->
    <path d="M2 104 L4.5 95 L7 104 Z" fill="#d8d8d8"/><circle cx="8" cy="102.5" r="2.6" fill="#1f1f1f" stroke="#d8d8d8" stroke-width="1"/><circle cx="9.5" cy="96.5" r="1.4" fill="#e6e6e6"/>
    <!-- world red (y~121) -->
    <circle cx="7" cy="121" r="4.8" fill="none" stroke="#d0504a" stroke-width="1.3"/><path d="M4 118 Q6 121 5 124 M8 116.5 Q10 120 9 125" fill="none" stroke="#d0504a" stroke-width="1.2"/>
    <!-- object orange (y~147) -->
    <path d="M1.5 143 V141.5 H3 M11 141.5 H12.5 V143 M12.5 151 V152.5 H11 M3 152.5 H1.5 V151" fill="none" stroke="#8a6a4a" stroke-width="1"/>
    <rect x="3.5" y="143.5" width="7" height="7" fill="#e8953a"/>
    <!-- wrench blue (y~168) -->
    <g transform="translate(0 1)"><path d="M2.5 174 L7.2 169.3" fill="none" stroke="#6a98e8" stroke-width="2.2" stroke-linecap="round"/><path d="M12.3 166 A3.1 3.1 0 1 1 9.2 162.9" fill="none" stroke="#6a98e8" stroke-width="2"/></g>
    <!-- particles (y~190) -->
    <g transform="translate(0 1)"><circle cx="3" cy="185" r="1.6" fill="#6a98e8"/><circle cx="11" cy="186" r="1.2" fill="#6a98e8"/><circle cx="4" cy="195" r="1.4" fill="#6a98e8"/><path d="M3 185 L10 194 M4 189 V194" stroke="#6a98e8" stroke-width="1"/></g>
    <!-- physics (y~211) -->
    <g transform="translate(0 1)"><circle cx="6.5" cy="211" r="4.5" fill="none" stroke="#6a98e8" stroke-width="1.2"/><circle cx="6.5" cy="211" r="2" fill="#6a98e8"/><circle cx="11" cy="207" r="1" fill="#6a98e8"/></g>
    <!-- constraints (y~232) -->
    <path d="M3 236 L10 228 A2.5 2.5 0 0 1 12 232 L5 238 A2.5 2.5 0 0 1 3 236 Z" fill="none" stroke="#6a98e8" stroke-width="1.3"/><circle cx="6" cy="234" r="1.5" fill="#6a98e8"/>
    <!-- data green (y~253) -->
    <g transform="translate(0 2)"><path d="M2 248 H12 L7 257 Z" fill="none" stroke="#3cc48c" stroke-width="1.3"/><circle cx="2" cy="248" r="1.6" fill="#1f1f1f" stroke="#3cc48c" stroke-width="1"/><circle cx="12" cy="248" r="1.6" fill="#1f1f1f" stroke="#3cc48c" stroke-width="1"/><circle cx="7" cy="257" r="1.6" fill="#1f1f1f" stroke="#3cc48c" stroke-width="1"/></g>
    <!-- material (y~274) -->
    <circle cx="7" cy="274" r="5" fill="#d86565"/><path d="M7 274 V269 A5 5 0 0 1 12 274 Z M7 274 V279 A5 5 0 0 1 2 274 Z" fill="#3a2a2a"/>
  </svg>

  <!-- main region -->
  <!-- breadcrumb row center y 33.7 -->
  <svg style="left:30px;top:28px" width="12" height="12" viewBox="0 0 12 12">
    <path d="M0.5 3 V0.5 H3 M9 0.5 H11.5 V3 M11.5 9 V11.5 H9 M3 11.5 H0.5 V9" fill="none" stroke="#9a9a9a" stroke-width="1"/>
    <rect x="2.5" y="2.5" width="7" height="7" rx="1" fill="#f0f0f0"/><rect x="4.5" y="4.5" width="3" height="3" fill="#c8c8c8"/>
  </svg>
  <div class="t" style="left:47px;top:29px;color:#d8d8d8">Gloves_...</div>
  <svg style="left:94px;top:30px" width="5" height="8" viewBox="0 0 5 8"><path d="M0.8 0.5 L4 4 L0.8 7.5" fill="none" stroke="#d0d0d0" stroke-width="1.2"/></svg>
  <svg style="left:105px;top:28px" width="12" height="12" viewBox="0 0 12 12"><path d="M1.5 1.5 H10.5 L6 10 Z" fill="none" stroke="#e0e0e0" stroke-width="1.1"/><circle cx="1.5" cy="1.5" r="1.3" fill="#e0e0e0"/><circle cx="10.5" cy="1.5" r="1.3" fill="#e0e0e0"/><circle cx="6" cy="10" r="1.3" fill="#e0e0e0"/></svg>
  <div class="t" style="left:123px;top:29px;color:#d8d8d8">C...</div>
  <svg style="left:147px;top:30px" width="5" height="8" viewBox="0 0 5 8"><path d="M0.8 0.5 L4 4 L0.8 7.5" fill="none" stroke="#d0d0d0" stroke-width="1.2"/></svg>
  <svg style="left:157px;top:28px" width="12" height="12" viewBox="0 0 12 12"><circle cx="6" cy="6" r="5.3" fill="#f0f0f0"/><path d="M6 6 V0.7 A5.3 5.3 0 0 1 11.3 6 Z M6 6 V11.3 A5.3 5.3 0 0 1 0.7 6 Z" fill="#2e2e2e"/></svg>
  <div class="t" style="left:175px;top:29px;color:#d8d8d8">Gloves_...</div>
  <svg style="left:231px;top:28px" width="12" height="12" viewBox="0 0 12 12"><path d="M7 1 L11 5 L9.5 5.5 L7.5 8 L7.5 9.5 L2.5 4.5 L4 4.5 L6.5 2.5 Z M4.5 7.5 L1 11" fill="none" stroke="#8a8a8a" stroke-width="1"/></svg>

  <!-- slot list -->
  <div class="a" style="left:28px;top:53px;width:193px;height:59px;background:#282828;border-radius:4px"></div>
  <div class="a" style="left:32px;top:57px;width:186px;height:14px;background:#4772b3;border-radius:3px"></div>
  <svg style="left:38px;top:58px" width="12" height="12" viewBox="0 0 12 12"><defs><radialGradient id="sph" cx="0.4" cy="0.45" r="0.6"><stop offset="0" stop-color="#8a5a2a"/><stop offset="0.45" stop-color="#4a3622"/><stop offset="1" stop-color="#0c1020"/></radialGradient></defs><circle cx="6" cy="6" r="5" fill="url(#sph)"/></svg>
  <div class="t" style="left:55px;top:59px;color:#f0f0f0;letter-spacing:-0.4px">Gloves_OR_Sensor_L</div>
  <svg style="left:36px;top:102px" width="6" height="6" viewBox="0 0 6 6"><path d="M0.5 0.5 L5.5 3 L0.5 5.5 Z" fill="#bdbdbd"/></svg>
  <svg style="left:129px;top:103px" width="9" height="4" viewBox="0 0 9 4"><g fill="#888"><rect x="0" y="0" width="1" height="1"/><rect x="2" y="0" width="1" height="1"/><rect x="4" y="0" width="1" height="1"/><rect x="6" y="0" width="1" height="1"/><rect x="0" y="2" width="1" height="1"/><rect x="2" y="2" width="1" height="1"/><rect x="4" y="2" width="1" height="1"/><rect x="6" y="2" width="1" height="1"/></g></svg>
  <div class="a" style="left:228px;top:53px;width:15px;height:29px;background:#4a4a4a;border-radius:3px"></div>
  <div class="a" style="left:228px;top:67px;width:15px;height:1px;background:#3a3a3a"></div>
  <svg style="left:231px;top:56px" width="9" height="24" viewBox="0 0 9 24"><path d="M0.5 4.5 H8.5 M4.5 0.5 V8.5 M0.5 18.5 H8.5" stroke="#d8d8d8" stroke-width="1.1"/></svg>
  <div class="btn" style="left:228px;top:88px;width:15px;height:14px;background:#282828"></div>
  <svg style="left:232px;top:93px" width="7" height="5" viewBox="0 0 7 5"><path d="M0.5 0.5 L3.5 3.8 L6.5 0.5" fill="none" stroke="#d8d8d8" stroke-width="1.3"/></svg>

  <!-- surface panel behind popup -->
  <div class="a" style="left:26px;top:140px;width:217px;height:208px;background:#383838;border-radius:4px"></div>
  <div class="a" style="left:26px;top:140px;width:217px;height:18px;background:#3d3d3d;border-radius:4px 4px 0 0"></div>
  <svg style="left:227px;top:148px" width="9" height="4" viewBox="0 0 9 4"><g fill="#888"><rect x="0" y="0" width="1" height="1"/><rect x="2" y="0" width="1" height="1"/><rect x="4" y="0" width="1" height="1"/><rect x="6" y="0" width="1" height="1"/><rect x="0" y="2" width="1" height="1"/><rect x="2" y="2" width="1" height="1"/><rect x="4" y="2" width="1" height="1"/><rect x="6" y="2" width="1" height="1"/></g></svg>
  <div class="a" style="left:30px;top:159px;width:211px;height:160px;background:#363636;border-radius:3px"></div>
  <svg style="left:227px;top:169px" width="9" height="4" viewBox="0 0 9 4"><g fill="#888"><rect x="0" y="0" width="1" height="1"/><rect x="2" y="0" width="1" height="1"/><rect x="4" y="0" width="1" height="1"/><rect x="6" y="0" width="1" height="1"/><rect x="0" y="2" width="1" height="1"/><rect x="2" y="2" width="1" height="1"/><rect x="4" y="2" width="1" height="1"/><rect x="6" y="2" width="1" height="1"/></g></svg>
  <div class="a" style="left:210px;top:186px;width:11px;height:12px;background:#282828;border-radius:3px"></div>
  <div class="a" style="left:210px;top:212px;width:11px;height:12px;background:#282828;border-radius:3px"></div>
  <div class="a" style="left:210px;top:232px;width:11px;height:11px;background:#282828;border-radius:3px"></div>
  <div class="a" style="left:210px;top:250px;width:11px;height:12px;background:#282828;border-radius:3px"></div>
  <div class="a" style="left:210px;top:270px;width:11px;height:13px;background:#555;border-radius:3px"></div>
  <div class="a" style="left:210px;top:288px;width:11px;height:14px;background:#4772b3;border-radius:3px"></div>
  <div class="a" style="left:228px;top:274px;width:3px;height:3px;background:#f0f0f0;border-radius:50%"></div>
  <div class="a" style="left:228px;top:293px;width:3px;height:3px;background:#f0f0f0;border-radius:50%"></div>
  <svg style="left:41px;top:328px" width="5" height="8" viewBox="0 0 5 8"><path d="M0.8 0.5 L4 4 L0.8 7.5" fill="none" stroke="#d8d8d8" stroke-width="1.2"/></svg>
  <div class="t" style="left:50px;top:327px;color:#e0e0e0">Diffuse</div>
  <svg style="left:41px;top:347px" width="5" height="8" viewBox="0 0 5 8"><path d="M0.8 0.5 L4 4 L0.8 7.5" fill="none" stroke="#d8d8d8" stroke-width="1.2"/></svg>
  <div class="t" style="left:50px;top:346px;color:#e0e0e0">Subsurface</div>

  <!-- material selector row -->
  <div class="a" style="left:28px;top:118px;width:23px;height:14px;background:#4772b3;border-radius:3px 0 0 3px"></div>
  <svg style="left:30px;top:119px" width="20" height="12" viewBox="0 0 20 12"><circle cx="6" cy="6" r="5.2" fill="#f0f0f0"/><path d="M6 6 V0.8 A5.2 5.2 0 0 1 11.2 6 Z M6 6 V11.2 A5.2 5.2 0 0 1 0.8 6 Z" fill="#4772b3"/><path d="M13.5 4.5 L15.5 6.5 L17.5 4.5" fill="none" stroke="#e0e0e0" stroke-width="1.2"/></svg>
  <div class="a" style="left:51px;top:118px;width:116px;height:14px;background:#1d1d1d"></div>
  <div class="t" style="left:57px;top:120px;color:#e8e8e8;letter-spacing:-0.4px">Gloves_OR_Sensor_L</div>
  <div class="a" style="left:167px;top:118px;width:46px;height:14px;background:#545454;border-radius:0 3px 3px 0"></div>
  <svg style="left:170px;top:119px" width="42" height="12" viewBox="0 0 42 12">
    <path d="M6 1 L10.5 2.5 V6 Q10.5 9.5 6 11 Q1.5 9.5 1.5 6 V2.5 Z" fill="none" stroke="#9a9a9a" stroke-width="1"/>
    <rect x="15" y="3" width="7" height="8" fill="none" stroke="#d0d0d0" stroke-width="1"/><path d="M17.5 0.8 H23 L25 2.8 V9 H22" fill="none" stroke="#d0d0d0" stroke-width="1"/>
    <path d="M31 2 L38 9 M38 2 L31 9" stroke="#e0e0e0" stroke-width="1.1"/>
  </svg>
  <div class="btn" style="left:221px;top:118px;width:22px;height:14px;background:#2a2a2a"></div>
  <svg style="left:223px;top:119px" width="20" height="12" viewBox="0 0 20 12"><path d="M1.5 1.5 H10.5 L6 10 Z" fill="none" stroke="#e0e0e0" stroke-width="1.1"/><circle cx="1.5" cy="1.5" r="1.3" fill="#e0e0e0"/><circle cx="10.5" cy="1.5" r="1.3" fill="#e0e0e0"/><circle cx="6" cy="10" r="1.3" fill="#e0e0e0"/><path d="M12.5 4.5 L14.5 6.5 L16.5 4.5" fill="none" stroke="#d8d8d8" stroke-width="1.2"/></svg>

  <!-- popup -->
  <div class="a" style="left:30px;top:134px;width:192px;height:189px;background:rgba(0,0,0,0.25);border-radius:4px;filter:blur(2px)"></div>
  <div class="a" style="left:28px;top:132px;width:189px;height:186px;background:#181818;border-radius:0 0 4px 4px"></div>
  <div class="a" style="left:32px;top:141px;width:181px;height:14px;background:#434343;border-radius:3px"></div>
  <svg style="left:35px;top:142px" width="11" height="12" viewBox="0 0 11 12"><ellipse cx="5.5" cy="6" rx="4" ry="5" fill="#1e1a17"/><path d="M2.5 4 Q4.5 1 6.5 3 L7.5 8 Q5 11 2.5 8 Z" fill="#77685a"/><circle cx="4.5" cy="3" r="1" fill="#b8aa9a"/></svg>
  <div class="t" style="left:58px;top:143px;color:#f0f0f0;letter-spacing:-0.4px">Gloves_OR_Sensor_L</div>
  <svg style="left:35px;top:158px" width="11" height="12" viewBox="0 0 11 12"><ellipse cx="5.5" cy="6" rx="3.5" ry="5" fill="#1a1715"/><path d="M3 4 Q5 1 7 3 L7.5 8 Q5 11 3 8 Z" fill="#7a6e62"/><circle cx="4.8" cy="3" r="1" fill="#c0b4a6"/></svg>
  <div class="t" style="left:58px;top:159px;color:#e0e0e0;letter-spacing:-0.4px">Gloves_OR_Sensor_R</div>
  <div class="a" style="left:32px;top:300px;width:181px;height:14px;background:#1d1d1d;border:1px solid #3a3a3a;border-radius:3px"></div>
  <svg style="left:36px;top:302px" width="11" height="11" viewBox="0 0 11 11"><circle cx="6.5" cy="4.5" r="3.3" fill="none" stroke="#d8d8d8" stroke-width="1"/><path d="M4 7 L0.8 10.2" stroke="#d8d8d8" stroke-width="1.2"/></svg>
  <div class="a" style="left:53px;top:302px;width:1px;height:10px;background:#4772b3"></div>
</div>
</div>

<!-- STATUS -->
<div id="status" class="a">
  <div class="key" style="left:7px;width:12px"></div>
  <svg style="left:9px;top:4px" width="8" height="8" viewBox="0 0 8 8"><path d="M6.5 0.5 V4.5 H1.5 M3.5 2.5 L1.5 4.5 L3.5 6.5" fill="none" stroke="#b8b8b8" stroke-width="1"/></svg>
  <div class="t st" style="left:21px">Confirm</div>
  <div class="key" style="left:60px;width:18px">Esc</div>
  <div class="t st" style="left:80px">Cancel</div>
  <div class="key" style="left:114px;width:18px">Ctrl</div>
  <div class="key" style="left:133px;width:12px">A</div>
  <div class="t st" style="left:147px">Select All</div>
  <div class="key" style="left:190px;width:18px">Ctrl</div>
  <div class="key" style="left:209px;width:12px">C</div>
  <div class="t st" style="left:223px">Copy</div>
  <div class="key" style="left:251px;width:18px">Ctrl</div>
  <div class="key" style="left:271px;width:12px">V</div>
  <div class="t st" style="left:284px">Paste</div>
  <div class="t st" style="left:1041px;color:#aaaaaa;letter-spacing:-0.08px">Scene Collection | Gloves_OR_Sensor_L | Verts:3,544 | Faces:7,088 | Tris:7,088 | Objects:2/2 | 4.5.3</div>
</div>

</body></html>
